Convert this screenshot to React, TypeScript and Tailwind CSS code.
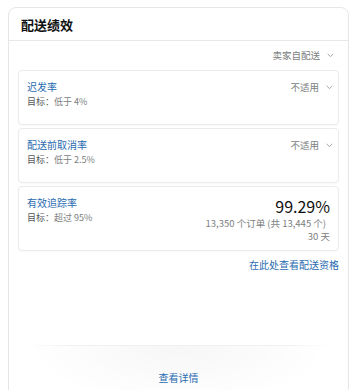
import React from 'react'

const Chevron = () => (
  <svg width="7" height="5" viewBox="0 0 7 5" className="ml-[7px] shrink-0" fill="none">
    <path d="M1 1.2 L3.5 3.6 L6 1.2" stroke="#9a9a9a" strokeWidth="0.9" strokeLinecap="round" strokeLinejoin="round" />
  </svg>
)

type Metric = {
  title: string
  target: string
  status?: string
}

const metrics: Metric[] = [
  { title: '迟发率', target: '低于 4%', status: '不适用' },
  { title: '配送前取消率', target: '低于 2.5%', status: '不适用' },
]

function MetricCard({ m }: { m: Metric }) {
  return (
    <div className="flex justify-between rounded-[4px] border border-[#ebebeb] bg-white pl-2 pr-[5px] pt-2 min-h-[55px] shadow-[0_1px_2px_rgba(0,0,0,0.03)]">
      <div>
        <div className="text-[10px] leading-[16px] text-[#2a6bb0]">{m.title}</div>
        <div className="text-[9px] leading-[13px] text-[#7b7e7e]">
          <span className="text-[#555858]">目标：</span>{m.target}
        </div>
      </div>
      <div className="flex items-start">
        <div className="flex items-center text-[9.5px] leading-[16px] text-[#7b7e7e]">
          {m.status}
          <Chevron />
        </div>
      </div>
    </div>
  )
}

export default function App() {
  return (
    <div className="w-[358px] h-[390px] overflow-hidden bg-white pt-[7px] pl-2 pr-[9px]" style={{ fontFamily: '"Noto Sans CJK SC", "Noto Sans", "Liberation Sans", sans-serif' }}>
      <div className="rounded-lg border border-[#e6e6e6] bg-white h-[420px] flex flex-col">
        {/* 标题 */}
        <div className="h-[33px] flex items-center px-3 border-b border-[#e8e8e8]">
          <h2 className="text-[13px] font-bold text-[#0f1111] leading-none">配送绩效</h2>
        </div>

        <div className="px-[9px]">
          <div className="flex justify-end items-center h-[29px] pr-[5px] text-[9.5px] text-[#7b7e7e]">
            卖家自配送
            <Chevron />
          </div>

          <div className="flex flex-col gap-[3px]">
            {metrics.map((m, i) => (
              <MetricCard key={i} m={m} />
            ))}

            {/* 有效追踪率 */}
            <div className="flex justify-between rounded-[4px] border border-[#ebebeb] bg-white px-2 pt-2 pb-[7px] shadow-[0_1px_2px_rgba(0,0,0,0.03)]">
              <div>
                <div className="text-[10px] leading-[16px] text-[#2a6bb0]">有效追踪率</div>
                <div className="text-[9px] leading-[13px] text-[#7b7e7e]">
                  <span className="text-[#555858]">目标：</span>超过 95%
                </div>
              </div>
              <div className="flex flex-col items-end">
                <div className="text-[16px] leading-[22px] text-[#0f1111]">99.29%</div>
                <div className="text-[9.5px] leading-[13px] text-[#7b7e7e] pr-1">13,350 个订单 (共 13,445 个)</div>
                <div className="text-[9.5px] leading-[13px] text-[#7b7e7e]">30 天</div>
              </div>
            </div>
          </div>

          <div className="flex justify-end mt-[7px]">
            <a className="text-[10px] leading-[14px] text-[#2a6bb0] cursor-pointer">在此处查看配送资格</a>
          </div>
        </div>

        {/* 底部 */}
        <div className="mt-[73px] mx-4">
          <div className="h-px bg-[linear-gradient(to_right,rgba(0,0,0,0),rgba(0,0,0,0.06)_15%,rgba(0,0,0,0.06)_85%,rgba(0,0,0,0))]" />
          <div className="h-[60px] bg-[radial-gradient(ellipse_at_top,rgba(0,0,0,0.035),rgba(0,0,0,0)_70%)] flex justify-center pt-[25px]">
            <a className="text-[10px] leading-[14px] text-[#2a6bb0] cursor-pointer">查看详情</a>
          </div>
        </div>
      </div>
    </div>
  )
}
